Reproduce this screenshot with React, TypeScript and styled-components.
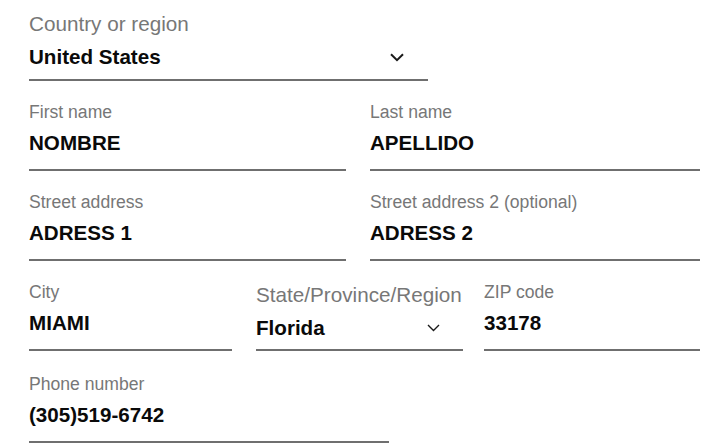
import React from "react";
import styled, { createGlobalStyle } from "styled-components";

const Global = createGlobalStyle`
  html, body { margin: 0; padding: 0; background: #ffffff; }
  body { font-family: "Liberation Sans", Arial, sans-serif; }
`;

const Form = styled.div`
  width: 715px;
  height: 445px;
  padding: 0 15px 0 29px;
  box-sizing: border-box;
  display: flex;
  flex-direction: column;
  overflow: hidden;
`;

const Row = styled.div`
  display: flex;
  align-items: flex-end;
`;

const Field = styled.div<{ $w: number; $top?: number; $bottom?: number; $ml?: number }>`
  width: ${(p) => p.$w}px;
  flex: none;
  display: flex;
  flex-direction: column;
  margin-left: ${(p) => p.$ml ?? 0}px;
  padding-top: ${(p) => p.$top ?? 21}px;
  padding-bottom: ${(p) => p.$bottom ?? 14}px;
  border-bottom: 2px solid #6f6f6f;
  box-sizing: content-box;
`;

const Label = styled.div<{ $big?: boolean }>`
  font-size: ${(p) => (p.$big ? "20.7px" : "17.6px")};
  line-height: ${(p) => (p.$big ? "24px" : "20px")};
  color: #777777;
  white-space: nowrap;
  margin-bottom: 9px;
`;

const Value = styled.div`
  display: flex;
  align-items: center;
  justify-content: space-between;
  font-size: 20.6px;
  line-height: 24px;
  font-weight: 700;
  color: #0a0a0a;
  white-space: nowrap;
`;

const Chevron = styled.svg<{ $right: number }>`
  flex: none;
  margin-right: ${(p) => p.$right}px;
`;

const BigChevron = () => (
  <Chevron $right={24} width="14" height="9" viewBox="0 0 14 9">
    <path d="M1 1.2 L7 7.2 L13 1.2" fill="none" stroke="#1a1a1a" strokeWidth="2" />
  </Chevron>
);

const SmallChevron = () => (
  <Chevron $right={23} width="13" height="8" viewBox="0 0 13 8">
    <path d="M1 1 L6.5 6.5 L12 1" fill="none" stroke="#1a1a1a" strokeWidth="1.4" />
  </Chevron>
);

export default function App() {
  return (
    <>
      <Global />
      <Form>
        <Row>
          <Field $w={399} $top={12} $bottom={10}>
            <Label $big>Country or region</Label>
            <Value>
              United States
              <BigChevron />
            </Value>
          </Field>
        </Row>
        <Row>
          <Field $w={317}>
            <Label>First name</Label>
            <Value>NOMBRE</Value>
          </Field>
          <Field $w={330} $ml={24}>
            <Label>Last name</Label>
            <Value>APELLIDO</Value>
          </Field>
        </Row>
        <Row>
          <Field $w={317}>
            <Label>Street address</Label>
            <Value>ADRESS 1</Value>
          </Field>
          <Field $w={330} $ml={24}>
            <Label>Street address 2 (optional)</Label>
            <Value>ADRESS 2</Value>
          </Field>
        </Row>
        <Row>
          <Field $w={203}>
            <Label>City</Label>
            <Value>MIAMI</Value>
          </Field>
          <Field $w={207} $bottom={9} $ml={24}>
            <Label $big>State/Province/Region</Label>
            <Value>
              Florida
              <SmallChevron />
            </Value>
          </Field>
          <Field $w={216} $ml={21}>
            <Label>ZIP code</Label>
            <Value>33178</Value>
          </Field>
        </Row>
        <Row>
          <Field $w={360} $top={23}>
            <Label>Phone number</Label>
            <Value>(305)519-6742</Value>
          </Field>
        </Row>
      </Form>
    </>
  );
}
